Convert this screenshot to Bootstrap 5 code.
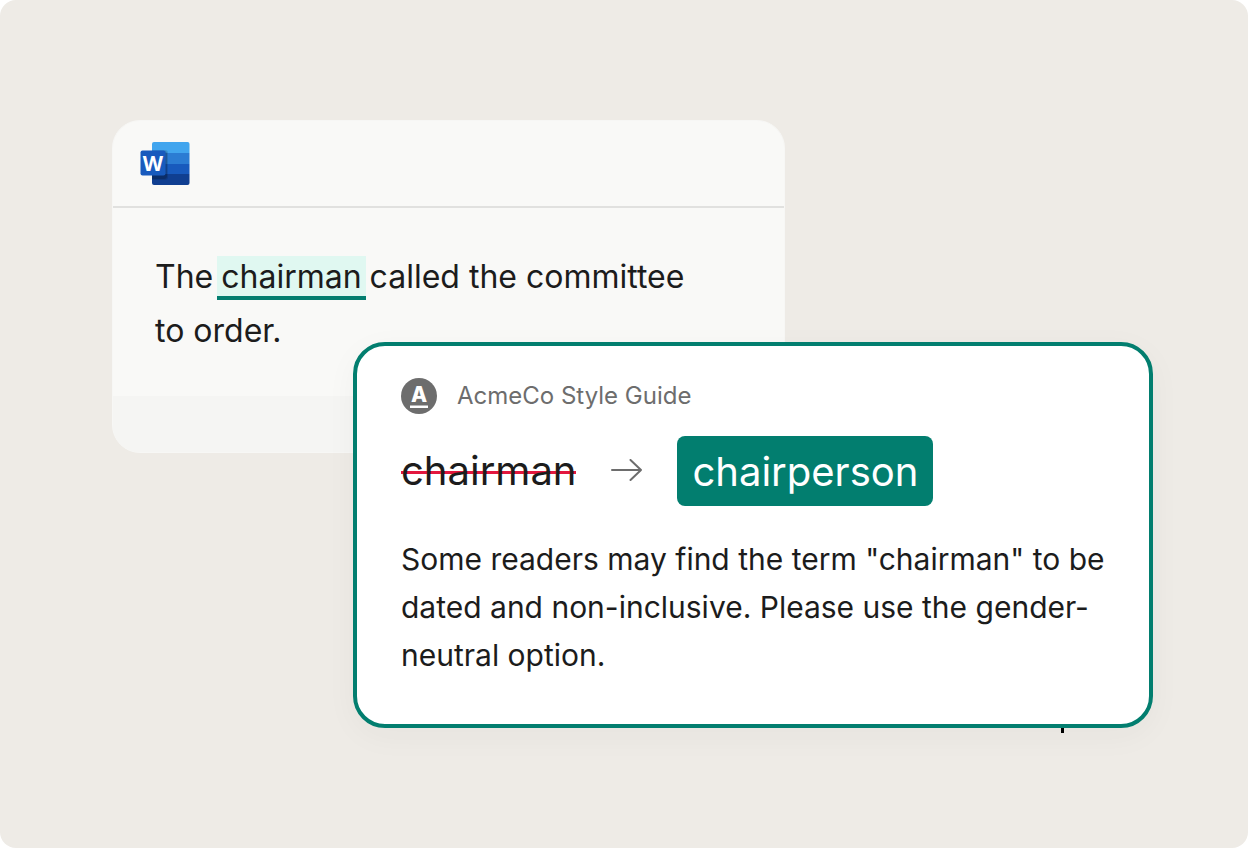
<!DOCTYPE html>
<html lang="en">
<head>
<meta charset="utf-8">
<meta name="viewport" content="width=device-width, initial-scale=1">
<title>AcmeCo Style Guide suggestion</title>
<link href="https://cdn.jsdelivr.net/npm/bootstrap@5.3.0/dist/css/bootstrap.min.css" rel="stylesheet">
<style>
  body { font-family: Inter, "Liberation Sans", sans-serif; color: #1c1c1c; background: #fff; }
  .stage { background: #eeebe6; border-radius: 16px; padding: 120px 95px 120px 112px; }
  .scene { display: grid; grid-template-columns: 241fr 432fr 368fr; }
  .doc { grid-area: 1 / 1 / 2 / 3; background: #f5f5f3; border: 1px solid #f7f7f5; border-radius: 28px; }
  .doc-head { background: #f9f9f7; border-bottom: 2px solid #e1e1df; padding: 20px 27px; }
  .doc-body { background: #f9f9f7; padding: 42px 42px 38px; font-size: 32px; line-height: 54px; }
  .doc-foot { height: 56px; }
  .flagged { background: #e0f8f1; border-bottom: 4px solid #027e6f; padding: 1px 4px 0; margin: 0 -5px; color: inherit; }
  .tip { grid-area: 2 / 2 / 3 / 4; margin-top: -111px; padding: 32px 44px 45px; border: 4px solid #027e6f; border-radius: 32px; box-shadow: 0 8px 32px rgba(60, 50, 40, .04); }
  .source { font-size: 24px; line-height: 36px; color: #6d6d6d; gap: 20px; }
  .swap { font-size: 40px; line-height: 56px; gap: 35px; margin: 22px 0 29px; }
  .swap del { text-decoration: none; background: linear-gradient(#e3173e, #e3173e) 0 28px / 100% 3px no-repeat; }
  .accept { background: #027e6f; color: #fff; font-size: 40px; line-height: 56px; padding: 8px 15px 6px; border-radius: 8px; }
  .reason { font-size: 30px; line-height: 48px; }
  .caret { right: 85px; top: 100%; width: 3px; height: 9px; background: #000; clip-path: inset(4px 0 0 0); }
  .logo-word { font: 700 21px "Open Sans", sans-serif; }
  .logo-acme { font: 800 21px Inter, sans-serif; }
</style>
</head>
<body>
<main class="stage min-vh-100">
  <div class="scene">
    <article class="doc overflow-hidden">
      <header class="doc-head d-flex">
        <svg width="50" height="45" viewBox="0 0 50 45" role="img" aria-label="Word">
          <defs><clipPath id="page"><rect x="12" y="1" width="37.500" height="43" rx="2"/></clipPath></defs>
          <g clip-path="url(#page)">
            <path fill="#41a5ee" d="M12 1h38v11H12z"/>
            <path fill="#2b7cd3" d="M12 12h38v11H12z"/>
            <path fill="#185abd" d="M12 23h38v10H12z"/>
            <path fill="#103f91" d="M12 33h38v11H12z"/>
            <path fill="#000" opacity=".12" d="M12 9h13q3 0 3 3v24q0 3-3 3H12z"/>
            <path fill="#000" opacity=".18" d="M12 10h12q3 0 3 3v22q0 3-3 3H12z"/>
          </g>
          <rect x=".500" y="9.500" width="25" height="25" rx="2" fill="#185abd"/>
          <text class="logo-word" x="13" y="29.500" text-anchor="middle" fill="#fff">W</text>
        </svg>
      </header>
      <p class="doc-body mb-0">The <mark class="flagged">chairman</mark> called the committee<br>to order.</p>
      <div class="doc-foot"></div>
    </article>
    <aside class="tip position-relative bg-white">
      <div class="source d-flex align-items-center">
        <svg width="36" height="36" viewBox="0 0 36 36" aria-hidden="true">
          <circle cx="18" cy="18" r="18" fill="#6d6d6d"/>
          <text class="logo-acme" x="18" y="24" text-anchor="middle" fill="#fff">A</text>
          <path fill="#fff" d="M9 27.500h18v2.500H9z"/>
        </svg>
        <span>AcmeCo Style Guide</span>
      </div>
      <div class="swap d-flex align-items-center">
        <del class="d-block">chairman</del>
        <svg width="31" height="24" viewBox="0 0 31 24" fill="none" stroke="#6d6d6d" stroke-width="2" stroke-linecap="round" stroke-linejoin="round" aria-hidden="true"><path d="M1 11h29M19.500 1 30 11 19.500 21"/></svg>
        <button type="button" class="accept border-0">chairperson</button>
      </div>
      <p class="reason mb-0">Some readers may find the term "chairman" to be dated and non-inclusive. Please use the gender-neutral option.</p>
      <span class="caret position-absolute" aria-hidden="true"></span>
    </aside>
  </div>
</main>
<script src="https://cdn.jsdelivr.net/npm/bootstrap@5.3.0/dist/js/bootstrap.bundle.min.js"></script>
</body>
</html>
